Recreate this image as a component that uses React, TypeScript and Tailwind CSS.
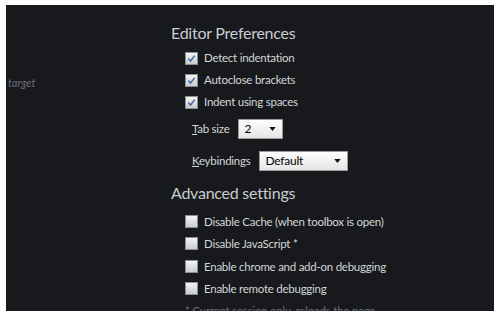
const editorOptions = ["Detect indentation", "Autoclose brackets", "Indent using spaces"];

const advancedOptions = [
  "Disable Cache (when toolbox is open)",
  "Disable JavaScript *",
  "Enable chrome and add-on debugging",
  "Enable remote debugging",
];

function Checkbox({ checked }: { checked: boolean }) {
  return (
    <span className="flex h-[13px] w-[13px] shrink-0 items-center justify-center border border-[#8a8d91] bg-gradient-to-b from-[#f4f4f4] to-[#c9cbcd]">
      {checked && (
        <svg viewBox="0 0 10 10" className="h-[9px] w-[9px]">
          <path d="M1.5 5.2 L4 7.8 L8.6 1.8" fill="none" stroke="#4a6fa5" strokeWidth="1.8" />
        </svg>
      )}
    </span>
  );
}

function Select({ value, width }: { value: string; width: string }) {
  return (
    <div
      className={`flex h-[20px] items-center justify-between border border-[#9a9a9a] bg-gradient-to-b from-[#fdfdfd] to-[#e6e6e6] pl-[5px] pr-[6px] text-[12px] text-black ${width}`}
    >
      <span>{value}</span>
      <svg viewBox="0 0 8 5" className="h-[4px] w-[7px]">
        <path d="M0 0 H8 L4 5 Z" fill="#111" />
      </svg>
    </div>
  );
}

function CheckRow({ label, checked, tall }: { label: string; checked: boolean; tall?: boolean }) {
  return (
    <label className={`flex items-center gap-[6px] pl-[14px] ${tall ? "h-[22.5px]" : "h-[22px]"}`}>
      <Checkbox checked={checked} />
      <span className="text-[11.5px] tracking-[-0.25px] text-[#d4d6d8]">{label}</span>
    </label>
  );
}

export default function App() {
  return (
    <div className="h-[315px] w-[500px] overflow-hidden bg-white pl-[6px] pt-[5px]" style={{ fontFamily: "Lato, sans-serif" }}>
      <div className="flex h-[306px] w-[488px] overflow-hidden bg-[#17191c]">
        <div className="w-[165px] shrink-0 pl-[2px] pt-[64px]">
          <span className="text-[11px] italic text-[#6d7176]">target</span>
        </div>

        <div className="flex flex-col pt-[16px]">
          <h2 className="h-[24px] text-[16px] leading-[24px] tracking-[-0.25px] text-[#c9ccd0]">Editor Preferences</h2>
          <div className="mt-[2px] flex flex-col">
            {editorOptions.map((opt) => (
              <CheckRow key={opt} label={opt} checked />
            ))}
          </div>
          <div className="mt-[6px] flex items-center gap-[9px] pl-[21px] text-[11.5px] tracking-[-0.25px] text-[#d4d6d8]">
            <span>
              <span className="underline">T</span>ab size
            </span>
            <Select value="2" width="w-[45px]" />
          </div>
          <div className="mt-[12px] flex items-center gap-[9px] pl-[21px] text-[11.5px] tracking-[-0.25px] text-[#d4d6d8]">
            <span>
              <span className="underline">K</span>eybindings
            </span>
            <Select value="Default" width="w-[89px]" />
          </div>
          <h2 className="mt-[10px] h-[24px] text-[16px] leading-[24px] tracking-[-0.25px] text-[#c9ccd0]">Advanced settings</h2>
          <div className="mt-[5px] flex flex-col">
            {advancedOptions.map((opt) => (
              <CheckRow key={opt} label={opt} checked={false} tall />
            ))}
          </div>
          <p className="mt-[3px] pl-[14px] text-[11px] text-[#6d7176]">* Current session only, reloads the page</p>
        </div>
      </div>
    </div>
  );
}
